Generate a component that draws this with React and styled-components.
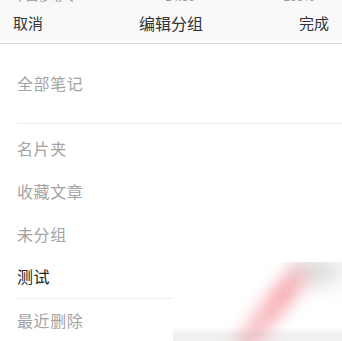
import React from 'react'
import styled, { createGlobalStyle } from 'styled-components'

const Global = createGlobalStyle`
  html, body { margin: 0; padding: 0; background: #fff; }
  body { font-family: "Noto Sans CJK SC", "Noto Sans", sans-serif; }
`

const Screen = styled.div`
  position: relative;
  width: 342px;
  height: 341px;
  overflow: hidden;
  background: #fff;
`

const Status = styled.div`
  height: 4px;
  overflow: hidden;
  background: #f8f8f8;
  display: flex;
  justify-content: space-between;
  padding: 0 14px;
  span {
    display: block;
    margin-top: -11px;
    font-size: 12px;
    line-height: 14px;
    color: #999;
  }
`

const Nav = styled.div`
  height: 40px;
  background: #f9f9f9;
  border-bottom: 1px solid #dcdcdc;
  display: flex;
  align-items: center;
  justify-content: space-between;
  padding: 0 13px 2px;
  box-sizing: border-box;
  font-size: 15px;
  color: #333;
`

const Title = styled.div`
  font-size: 16px;
  color: #333;
`

const Group = styled.div`
  padding: ${p => p.$pad || 0};
`

const Row = styled.div`
  box-sizing: border-box;
  height: ${p => p.$h || 43}px;
  padding-bottom: 2px;
  display: flex;
  align-items: center;
  margin-left: 17px;
  font-size: 16px;
  letter-spacing: 0.6px;
  color: ${p => (p.$dark ? '#222' : '#a3a3a3')};
  border-bottom: ${p => (p.$line ? '1px solid #ededed' : 'none')};
`

const Mark = styled.div`
  position: absolute;
  left: 173px;
  top: 262px;
  right: 0;
  bottom: 0;
  background: linear-gradient(to bottom, #fff 0, #fff 66px, #f0f0f0 72px);
  overflow: hidden;
`

const Stroke = styled.div`
  position: absolute;
  left: 44px;
  top: 36px;
  width: 110px;
  height: 22px;
  border-radius: 11px;
  background: linear-gradient(to right, rgba(240, 140, 150, 0.35), rgba(240, 120, 130, 0.65) 70%, rgba(240, 140, 150, 0.3));
  transform: rotate(-52deg);
  transform-origin: center;
  filter: blur(8px);
`

const Smudge = styled.div`
  position: absolute;
  left: 120px;
  top: -6px;
  width: 50px;
  height: 30px;
  border-radius: 50%;
  background: rgba(190, 190, 190, 0.5);
  filter: blur(10px);
`

export default function App() {
  return (
    <Screen>
      <Global />
      <Status>
        <span>中国移动 令</span>
        <span>14:30</span>
        <span>100% ▭</span>
      </Status>
      <Nav>
        <span>取消</span>
        <Title>编辑分组</Title>
        <span>完成</span>
      </Nav>
      <Group>
        <Row $h={80} $line>全部笔记</Row>
      </Group>
      <Group $pad="3px 0 0">
        <Row>名片夹</Row>
        <Row>收藏文章</Row>
        <Row>未分组</Row>
        <Row $dark $line>测试</Row>
        <Row>最近删除</Row>
      </Group>
      <Mark>
        <Smudge />
        <Stroke />
      </Mark>
    </Screen>
  )
}
